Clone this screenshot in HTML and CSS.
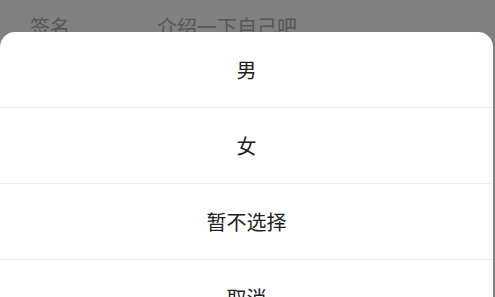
FILE: index.html
```html
<!DOCTYPE html>
<html lang="zh-cn">
<head>
<meta charset="UTF-8">
<title>选择性别</title>
<meta name="viewport" content="width=device-width, initial-scale=1">
<link rel="stylesheet" href="styles.css">
</head>
<body>
<div class="page-row">
    <span class="row-label">签名</span>
    <span class="row-value">介绍一下自己吧</span>
</div>
<div class="sheet">
    <div class="sheet-item">男</div>
    <div class="sheet-item">女</div>
    <div class="sheet-item">暂不选择</div>
    <div class="sheet-item">取消</div>
</div>
</body>
</html>
```

FILE: styles.css
```css
body {
    margin: 0;
    background: #808080;
    font-family: "Noto Sans CJK SC", "Noto Sans", sans-serif;
    overflow: hidden;
}
.page-row {
    display: flex;
    height: 32px;
    padding-left: 30px;
    overflow: hidden;
    color: #575757;
    font-size: 20px;
    line-height: 28px;
    padding-top: 13px;
    box-sizing: border-box;
}
.row-label { width: 127px; }
.sheet {
    width: 493px;
    background: #fff;
    border-radius: 15px 15px 0 0;
}
.sheet-item {
    height: 75px;
    display: flex;
    align-items: center;
    justify-content: center;
    font-size: 20px;
    color: #222;
    border-bottom: 1px solid #eee;
}
```
